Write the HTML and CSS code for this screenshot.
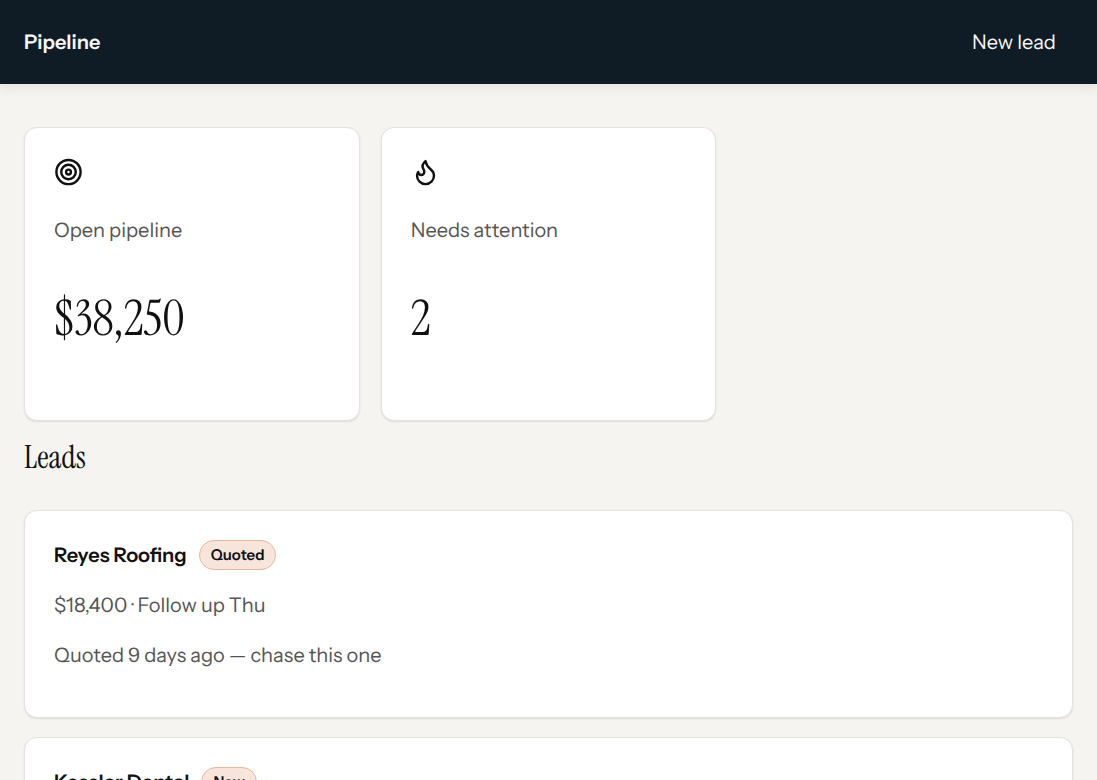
FILE: index.html
```html
<!DOCTYPE html>
<html lang="en">
<head>
    <meta charset="UTF-8">
    <meta name="viewport" content="width=device-width, initial-scale=1.0">
    <title>Pipeline</title>
    <link rel="stylesheet" href="styles.css">
</head>
<body>

    <header class="topbar">
        <strong class="brand">Pipeline</strong>
        <button type="button" class="new-lead">New lead</button>
    </header>

    <main class="content">
        <section class="stats">
            <article class="card">
                <svg class="icon" viewBox="0 0 24 24" aria-hidden="true">
                    <circle cx="12" cy="12" r="10"/>
                    <circle cx="12" cy="12" r="6"/>
                    <circle cx="12" cy="12" r="2"/>
                </svg>
                <p class="text">Open pipeline</p>
                <p class="value">$38,250</p>
            </article>
            <article class="card">
                <svg class="icon" viewBox="0 0 24 24" aria-hidden="true">
                    <path d="M8.5 14.5A2.5 2.5 0 0 0 11 12c0-1.38-.5-2-1-3-1.072-2.143-.224-4.054 2-6 .5 2.5 2 4.9 4 6.5 2 1.6 3 3.5 3 5.5a7 7 0 1 1-14 0c0-1.153.433-2.294 1-3a2.5 2.5 0 0 0 2.5 2.5z"/>
                </svg>
                <p class="text">Needs attention</p>
                <p class="value">2</p>
            </article>
        </section>

        <h2 class="section-title">Leads</h2>

        <section class="leads">
            <article class="card">
                <div class="lead-head">
                    <h3 class="lead-name">Reyes Roofing</h3>
                    <span class="badge">Quoted</span>
                </div>
                <p class="text">$18,400 · Follow up Thu</p>
                <p class="text">Quoted 9 days ago — chase this one</p>
            </article>
            <article class="card">
                <div class="lead-head">
                    <h3 class="lead-name">Kessler Dental</h3>
                    <span class="badge">New</span>
                </div>
            </article>
        </section>
    </main>

</body>
</html>
```
FILE: styles.css
```css
* {
    box-sizing: border-box;
}

body {
    margin: 0;
    background-color: #f5f4f0;
    color: #111111;
    font-family: "Instrument Sans", Inter, sans-serif;
    font-size: 20px;
    line-height: 30px;
    text-rendering: geometricPrecision;
}

h2, h3, p {
    margin: 0;
}

.topbar {
    display: flex;
    justify-content: space-between;
    align-items: center;
    min-height: 84px;
    padding: 0 24px;
    background-color: #101c25;
    color: #f5f7f8;
    box-shadow: 0 4px 12px rgba(0, 0, 0, 0.08);
}

.brand {
    font-size: 20px;
    font-weight: 600;
}

.new-lead {
    padding: 8px 17px;
    border: none;
    background: none;
    color: inherit;
    font: inherit;
    text-rendering: inherit;
    cursor: pointer;
}

.content {
    padding: 43px 24px 24px;
}

.stats {
    display: grid;
    grid-template-columns: repeat(3, 1fr);
    gap: 21px;
}

.card {
    padding: 29px 29px 27px;
    background-color: #ffffff;
    border: 1px solid #e3e2df;
    border-radius: 13px;
    box-shadow: 0 1px 2px rgba(0, 0, 0, 0.1);
}

.icon {
    display: block;
    width: 29px;
    height: 30px;
    margin-bottom: 28px;
    fill: none;
    stroke: currentColor;
    stroke-width: 2;
    stroke-linecap: round;
    stroke-linejoin: round;
}

.text {
    margin-bottom: 20px;
    color: #555555;
}

.value {
    margin: 38px 0;
    font-family: "Instrument Serif", "Liberation Serif", serif;
    font-size: 49px;
    line-height: 72px;
}

.section-title {
    padding: 16px 0 33px;
    font-family: "Instrument Serif", "Liberation Serif", serif;
    font-size: 32px;
    font-weight: 400;
    line-height: 40px;
}

.leads {
    display: grid;
    gap: 19px;
}

.lead-head {
    display: flex;
    align-items: center;
    gap: 12px;
    margin-bottom: 20px;
}

.lead-name {
    font-size: 20px;
    font-weight: 600;
}

.badge {
    padding: 0 11px;
    background-color: #f7e5dc;
    border: 1px solid #e5b79d;
    border-radius: 15px;
    font-size: 15px;
    font-weight: 600;
    line-height: 28px;
}
```
